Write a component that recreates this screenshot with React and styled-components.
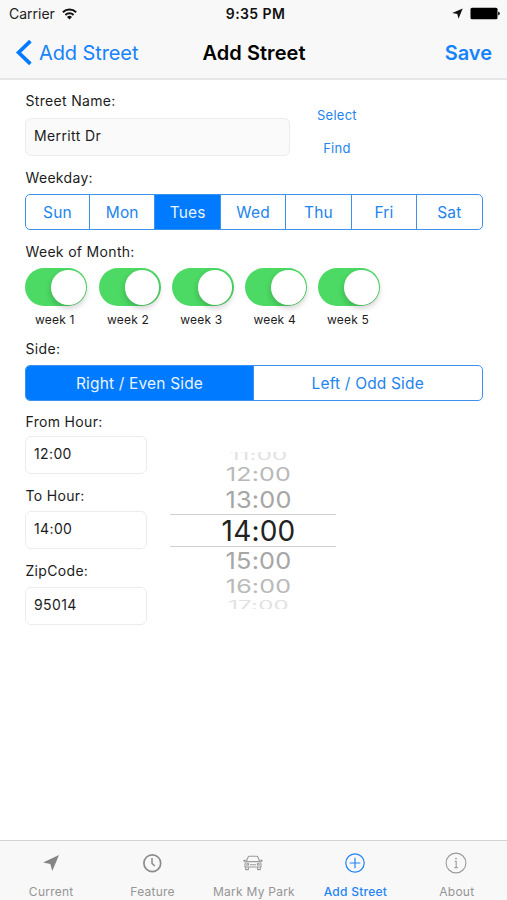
import React, { useState } from "react";
import styled, { createGlobalStyle, css } from "styled-components";

const BLUE = "#007aff";

const GlobalStyle = createGlobalStyle`
  * { box-sizing: border-box; }
  body {
    margin: 0;
    background: #fff;
    font-family: Inter, "Liberation Sans", sans-serif;
    color: #1c1c1c;
  }
  button { font-family: inherit; border: 0; padding: 0; background: none; cursor: pointer; }
  svg { display: block; }
`;

const Screen = styled.div`
  width: 507px;
  height: 900px;
  display: flex;
  flex-direction: column;
  overflow: hidden;
  background: #fff;
`;

const Header = styled.header`
  height: 80px;
  background: #f8f8f8;
  border-bottom: 2px solid #e6e7e8;
`;

const StatusBar = styled.div`
  height: 27px;
  padding: 0 7px 0 9px;
  display: grid;
  grid-template-columns: 1fr auto 1fr;
  align-items: center;
  font-size: 14px;
  color: #222;
`;

const StatusGroup = styled.div`
  display: flex;
  align-items: center;
  gap: ${(p) => p.$gap}px;
  justify-content: ${(p) => (p.$end ? "flex-end" : "flex-start")};
`;

const Clock = styled.span`
  font-weight: 600;
  font-size: 14px;
  letter-spacing: 0.4px;
  padding-left: 2px;
  color: #111;
`;

const NavBar = styled.nav`
  height: 51px;
  padding: 0 15px;
  display: grid;
  grid-template-columns: 1fr auto 1fr;
  align-items: center;
`;

const NavButton = styled.button`
  display: flex;
  align-items: center;
  gap: 7px;
  justify-self: ${(p) => (p.$end ? "end" : "start")};
  color: #1783f9;
  font-size: 20px;
  font-weight: ${(p) => (p.$end ? 600 : 400)};
  letter-spacing: ${(p) => (p.$end ? 0 : -0.1)}px;
`;

const Title = styled.h1`
  margin: 0;
  padding-left: 1px;
  font-size: 20px;
  font-weight: 600;
  letter-spacing: 0.05px;
  color: #000;
`;

const Form = styled.main`
  flex: 1;
  padding: 12px 24.5px 0 25px;
`;

const Label = styled.div`
  height: 18px;
  line-height: 18px;
  font-size: 14px;
  letter-spacing: 0.32px;
  margin-top: ${(p) => p.$top || 0}px;
  margin-left: 0.5px;
`;

const Field = styled.input`
  display: block;
  width: ${(p) => p.$width}px;
  height: 38px;
  margin-top: ${(p) => p.$top}px;
  padding: 0 8px 4px;
  border: 1px solid #ececec;
  border-radius: 6px;
  background: ${(p) => (p.$filled ? "#fafafa" : "#fff")};
  font: 400 14px Inter, sans-serif;
  letter-spacing: 0.38px;
  color: #1c1c1c;
  outline: none;
`;

const StreetRow = styled.div`
  display: flex;
  height: 64px;
`;

const StreetActions = styled.div`
  display: flex;
  flex-direction: column;
  align-items: center;
  gap: 17px;
  margin: 15px 0 0 27px;
`;

const LinkButton = styled.button`
  height: 16px;
  line-height: 16px;
  font-size: 13px;
  letter-spacing: 0.25px;
  color: #2384ee;
`;

const Segments = styled.div`
  display: flex;
  height: 36px;
  margin-top: ${(p) => p.$top}px;
  border: 1.5px solid #3c92ee;
  border-radius: 5px;
  overflow: hidden;
`;

const Segment = styled.button`
  flex: 1 1 0;
  min-width: 0;
  font-size: 15.5px;
  letter-spacing: 0.17px;
  color: #2384ee;
  & + & { border-left: 1px solid #3c92ee; }
  &:first-child { flex: 0 0 ${(p) => p.$first}; }
  ${(p) => p.$on && css`
    background: ${BLUE};
    color: #e8f3ff;
  `}
`;

const Weeks = styled.div`
  display: flex;
  gap: 11.3px;
  margin: 7px 0 0 0.3px;
`;

const Week = styled.div`
  width: 62px;
  display: flex;
  flex-direction: column;
  align-items: center;
`;

const Switch = styled.button`
  display: flex;
  justify-content: ${(p) => (p.$on ? "flex-end" : "flex-start")};
  width: 62px;
  height: 38px;
  border-radius: 19px;
  background: ${(p) => (p.$on ? "#4cd964" : "#e5e5e5")};
  padding: 2px 1.5px;
`;

const Knob = styled.span`
  width: 34.5px;
  height: 34.5px;
  border-radius: 50%;
  background: #fff;
  box-shadow: 0 3px 6px rgba(0, 0, 0, 0.2);
`;

const Caption = styled.span`
  margin-top: 5px;
  height: 18px;
  line-height: 18px;
  font-size: 12px;
  letter-spacing: 0.2px;
  padding-right: 3px;
`;

const HoursRow = styled.div`
  display: flex;
`;

const Hours = styled.div`
  width: 145px;
`;

const Picker = styled.div`
  width: 166px;
  height: 157px;
  margin-top: 51px;
  display: flex;
  flex-direction: column;
  align-items: center;
  overflow: hidden;
`;

const PickerRow = styled.div`
  flex: none;
  width: 100%;
  height: ${(p) => p.$h}px;
  display: flex;
  align-items: center;
  justify-content: center;
  padding-left: 11px;
  padding-top: ${(p) => p.$drop || 0}px;
  padding-bottom: ${(p) => p.$lift || 0}px;
  font-size: ${(p) => p.$size}px;
  line-height: 1;
  letter-spacing: 0.2px;
  color: ${(p) => p.$color};
  ${(p) => p.$selected && css`
    border-top: 1px solid #d0d0d0;
    border-bottom: 1px solid #d0d0d0;
  `}
`;

const PickerText = styled.span`
  transform: scaleY(${(p) => p.$squash});
`;

const TabBar = styled.footer`
  height: 60px;
  border-top: 1px solid #d4d4d4;
  background: #f8f8f8;
  display: grid;
  grid-template-columns: repeat(5, 1fr);
`;

const Tab = styled.button`
  display: flex;
  flex-direction: column;
  align-items: center;
  color: ${(p) => (p.$active ? "#2384f5" : "#959595")};
  font-size: 12px;
  letter-spacing: 0.25px;
`;

const TabIcon = styled.span`
  height: 43px;
  display: flex;
  align-items: center;
`;

const TabText = styled.span`
  height: 16px;
  line-height: 16px;
  padding-left: 1px;
  white-space: nowrap;
  font-weight: ${(p) => (p.$active ? 500 : 400)};
`;

const Wifi = () => (
  <svg width="15" height="12" viewBox="0 0 15 12" fill="none" stroke="#111" strokeWidth="2">
    <path d="M0.9 4.2a9.4 9.4 0 0 1 13.2 0" />
    <path d="M3.4 7a5.8 5.8 0 0 1 8.2 0" />
    <path d="M7.5 11.6L5 9a3.6 3.6 0 0 1 5 0z" fill="#111" stroke="none" />
  </svg>
);

const StatusArrow = () => (
  <svg width="11" height="11" viewBox="0 0 11 11" fill="#111">
    <path d="M10.7 0.5L6.5 10.8L5.3 6L0.2 5z" />
  </svg>
);

const Battery = () => (
  <svg width="30" height="13" viewBox="0 0 30 13">
    <rect x="0.5" y="0.8" width="27" height="11.4" rx="1.5" fill="#000" />
    <path d="M28.2 4.4q1.6 0.5 1.6 2.1t-1.6 2.1z" fill="#000" />
  </svg>
);

const BackChevron = () => (
  <svg width="17" height="26" viewBox="0 0 17 26" fill="none" stroke={BLUE} strokeWidth="3.7">
    <path d="M15.4 1.1L3.6 12.5L15.4 23.9" />
  </svg>
);

const ArrowIcon = () => (
  <svg width="18" height="18" viewBox="0 0 18 18" fill="#858585">
    <path d="M17 1L10.3 17L8.3 9.9L1 8.4z" />
  </svg>
);

const ClockIcon = () => (
  <svg width="20" height="20" viewBox="0 0 20 20" fill="none" stroke="#8c8c8c">
    <circle cx="10.3" cy="10.2" r="8.4" strokeWidth="1.7" />
    <path d="M10 5v5.4l2.8 2.6" strokeWidth="1.5" />
  </svg>
);

const CarIcon = () => (
  <svg width="20" height="16" viewBox="0 0 20 16" fill="none" stroke="#9b9b9b" strokeWidth="1.1" strokeLinejoin="round">
    <path d="M3.3 6.6L5 2.2Q5.3 1.3 6.4 1.3H13.6Q14.7 1.3 15 2.2L16.7 6.6" />
    <path d="M3.5 5.2H1.2Q0.6 5.3 0.9 6L2.5 6.8M16.5 5.2H18.8Q19.4 5.3 19.1 6L17.5 6.8" />
    <path d="M3.3 6.6H16.7Q18 7.4 18 9V12H2V9Q2 7.4 3.3 6.6z" />
    <path d="M2.7 12V14.6H5.4V12M14.6 12V14.6H17.3V12M7 9.8H13" />
    <circle cx="4.7" cy="9.3" r="1" />
    <circle cx="15.3" cy="9.3" r="1" />
  </svg>
);

const PlusIcon = () => (
  <svg width="20" height="20" viewBox="0 0 20 20" fill="none" stroke="#2384f5" strokeWidth="1.2">
    <circle cx="10" cy="10" r="9.2" />
    <path d="M10 4.7v10.6M4.7 10h10.6" />
  </svg>
);

const InfoIcon = () => (
  <svg width="22" height="22" viewBox="0 0 22 22" fill="none" stroke="#9b9b9b" strokeWidth="1.1">
    <circle cx="11" cy="11" r="9.9" />
    <path d="M9.6 9.2H11.2V15.5M9.4 15.6H12.8" />
    <circle cx="11" cy="6.6" r="0.9" fill="#9b9b9b" stroke="none" />
  </svg>
);

const DAYS = ["Sun", "Mon", "Tues", "Wed", "Thu", "Fri", "Sat"];
const SIDES = ["Right / Even Side", "Left / Odd Side"];
const HOURS = [
  { text: "11:00", h: 11, size: 24, squash: 0.55, lift: 4, color: "#e2e2e2" },
  { text: "12:00", h: 22, size: 25, squash: 0.76, color: "#b9b9b9" },
  { text: "13:00", h: 29, size: 25.3, squash: 0.93, color: "#a6a6a6" },
  { text: "14:00", h: 33, size: 28, squash: 1, color: "#222", selected: true },
  { text: "15:00", h: 27, size: 25.3, squash: 0.93, color: "#a6a6a6" },
  { text: "16:00", h: 25, size: 25, squash: 0.76, color: "#b9b9b9" },
  { text: "17:00", h: 10, size: 24, squash: 0.55, drop: 4, color: "#e2e2e2" },
];
const TABS = [
  { text: "Current", Icon: ArrowIcon },
  { text: "Feature", Icon: ClockIcon },
  { text: "Mark My Park", Icon: CarIcon },
  { text: "Add Street", Icon: PlusIcon },
  { text: "About", Icon: InfoIcon },
];

export default function App() {
  const [day, setDay] = useState(2);
  const [side, setSide] = useState(0);
  const [tab, setTab] = useState(3);
  const [weeks, setWeeks] = useState([true, true, true, true, true]);
  const toggle = (i) => setWeeks(weeks.map((w, n) => (n === i ? !w : w)));

  return (
    <Screen>
      <GlobalStyle />
      <Header>
        <StatusBar>
          <StatusGroup $gap={7}>Carrier <Wifi /></StatusGroup>
          <Clock>9:35 PM</Clock>
          <StatusGroup $gap={7} $end><StatusArrow /><Battery /></StatusGroup>
        </StatusBar>
        <NavBar>
          <NavButton><BackChevron />Add Street</NavButton>
          <Title>Add Street</Title>
          <NavButton $end>Save</NavButton>
        </NavBar>
      </Header>
      <Form>
        <StreetRow>
          <div>
            <Label>Street Name:</Label>
            <Field $width={265} $top={8} $filled defaultValue="Merritt Dr" />
          </div>
          <StreetActions>
            <LinkButton>Select</LinkButton>
            <LinkButton>Find</LinkButton>
          </StreetActions>
        </StreetRow>
        <Label $top={13}>Weekday:</Label>
        <Segments $top={7}>
          {DAYS.map((d, i) => (
            <Segment key={d} $first="63px" $on={i === day} onClick={() => setDay(i)}>{d}</Segment>
          ))}
        </Segments>
        <Label $top={13}>Week of Month:</Label>
        <Weeks>
          {weeks.map((on, i) => (
            <Week key={i}>
              <Switch $on={on} onClick={() => toggle(i)}><Knob /></Switch>
              <Caption>week {i + 1}</Caption>
            </Week>
          ))}
        </Weeks>
        <Label $top={11}>Side:</Label>
        <Segments $top={7}>
          {SIDES.map((s, i) => (
            <Segment key={s} $first="227px" $on={i === side} onClick={() => setSide(i)}>{s}</Segment>
          ))}
        </Segments>
        <HoursRow>
          <Hours>
            <Label $top={12}>From Hour:</Label>
            <Field $width={122} $top={5} defaultValue="12:00" />
            <Label $top={13}>To Hour:</Label>
            <Field $width={122} $top={6} defaultValue="14:00" />
            <Label $top={13}>ZipCode:</Label>
            <Field $width={122} $top={7} defaultValue="95014" />
          </Hours>
          <Picker>
            {HOURS.map((r) => (
              <PickerRow
                key={r.text}
                $h={r.h}
                $size={r.size}
                $lift={r.lift}
                $drop={r.drop}
                $color={r.color}
                $selected={r.selected}
              >
                <PickerText $squash={r.squash}>{r.text}</PickerText>
              </PickerRow>
            ))}
          </Picker>
        </HoursRow>
      </Form>
      <TabBar>
        {TABS.map(({ text, Icon }, i) => (
          <Tab key={text} $active={i === tab} onClick={() => setTab(i)}>
            <TabIcon><Icon /></TabIcon>
            <TabText $active={i === tab}>{text}</TabText>
          </Tab>
        ))}
      </TabBar>
    </Screen>
  );
}
